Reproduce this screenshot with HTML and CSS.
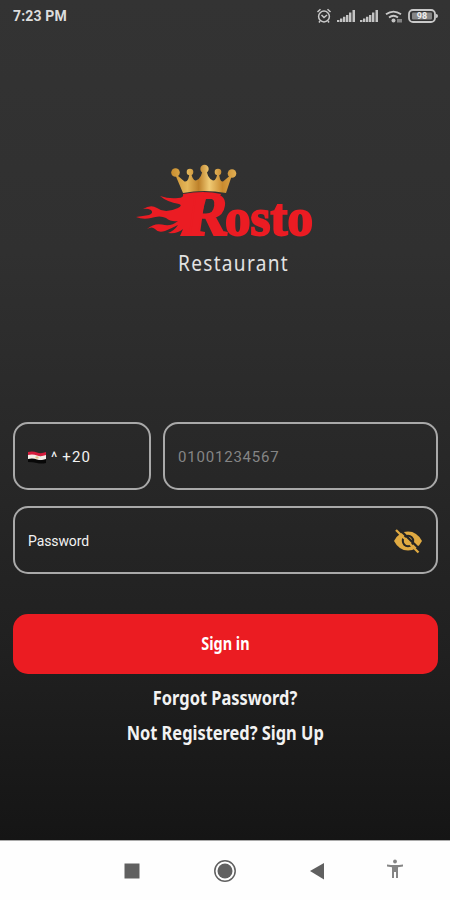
FILE: index.html
```html
<!DOCTYPE html>
<html lang="en">
<head>
<meta charset="utf-8">
<meta name="viewport" content="width=device-width">
<title>Rosto Restaurant</title>
<link rel="stylesheet" href="styles.css">
</head>
<body>
<main class="screen">
  <header class="status">
    <span class="time">7:23 PM</span>
    <svg class="status-icons" viewBox="0 0 124 20" width="124" height="20">
      <g fill="none" stroke="#c9c9c9" stroke-width="1.5">
        <circle cx="9" cy="10.5" r="5.4"/><path d="M2.5 6l3-2.8M15.500 6l-3-2.800M6.500 9l2.500 2.500L12 9M5 15l-1 1.500M13 15l1 1.500"/>
      </g>
      <g fill="#c4c4c4">
        <path d="M22 14h2.400v2H22zM25 12.500h2.400V16H25zM28 10.800h2.400V16H28zM31 9h2.400v7H31zM34 6.500h2.400V16H34zM37.500 4h2.500v12h-2.500z"/>
        <path d="M45 14h2.400v2H45zM48 12.500h2.400V16H48zM51 10.800h2.400V16H51zM54 9h2.400v7H54zM57 6.500h2.400V16H57zM60.500 4h2.500v12h-2.500z"/>
        <circle cx="78.500" cy="14.500" r="2"/><path d="M82 13h5v3.500h-5z" opacity=".55"/>
      </g>
      <g fill="none" stroke="#c9c9c9" stroke-width="1.800">
        <path d="M71 8.300q7.500-5.500 15 0M74 11.500q4.500-3.500 9 0"/>
        <rect x="94" y="4" width="26" height="12" rx="4"/>
      </g>
      <path d="M121 8q2 0 2 2t-2 2z" fill="#c9c9c9"/>
      <rect x="97" y="6.500" width="20" height="7" rx="1" fill="#858585"/>
      <text x="107" y="13.200" class="charge">98</text>
    </svg>
  </header>

  <section class="brand">
    <svg viewBox="125 155 200 125" width="200" height="125" role="img" aria-label="Rosto Restaurant">
      <defs>
        <linearGradient id="gold" gradientUnits="userSpaceOnUse" x1="171" y1="0" x2="237" y2="0">
          <stop offset="0" stop-color="#c98d2d"/><stop offset=".25" stop-color="#e5b75a"/><stop offset=".42" stop-color="#bd8029"/><stop offset=".58" stop-color="#f0cb75"/><stop offset=".78" stop-color="#c98a2e"/><stop offset="1" stop-color="#e2b054"/>
        </linearGradient>
      </defs>
      <g fill="url(#gold)">
        <path d="M183 193L174.500 173l10 8.500q4.500 1 5-9.500h1.500q1.500 9 5 8.500 6-2 7-13h3q1 11 7 13 3.500.5 4.500-8.500h1.500q.5 10.500 4 9.500l9.500-8L226 193q-22-4-43 0z"/>
        <circle cx="175.500" cy="172.500" r="4.300"/><circle cx="190" cy="172" r="3.300"/><circle cx="204.500" cy="169" r="4.200"/><circle cx="218" cy="172" r="3.300"/><circle cx="232" cy="173.500" r="4.300"/>
      </g>
      <path fill="#eb1c23" d="M183 194Q204 190 221 194L219 199H206L196 236H180L183 229Q178 234 168 233Q174 231 178 225Q172 228 165 231Q158 233 155 229Q152 226 147 229Q154 223 162 224.500Q171 227 178 221Q171 222 166 218Q160 215 151 218Q143 220 136 217Q143 216 149 215Q154 213 151 210Q147 208 143 209Q151 204 157 208Q165 214 178 208Q183 205 179 204Q167 202 160 196Q169 199 178 198Q184 198 183 194z"/>
      <text class="initial" transform="translate(184 235) skewX(-8)" textLength="42" lengthAdjust="spacingAndGlyphs">R</text>
      <text class="wordmark" x="225" y="235" textLength="88" lengthAdjust="spacingAndGlyphs">osto</text>
      <text class="subtitle" x="178" y="270.500" textLength="111" lengthAdjust="spacingAndGlyphs">Restaurant</text>
    </svg>
  </section>

  <form class="login">
    <div class="phone">
      <div class="field country">
        <svg class="flag" viewBox="0 0 18 15" width="18" height="15">
          <path d="M0 2q5-1 9 .5T18 2v4H0z" fill="#d51c3c"/><path d="M0 5q5-1 9 .5t9-.5v5H0z" fill="#f4eee8"/><path d="M0 9q5-1 9 .500t9-.5v4q-5 1-9 0T0 12z" fill="#080808"/><path d="M7.500 6.500h3v2h-3z" fill="#dfc188"/>
        </svg>
        <span class="caret">^</span><span class="code">+20</span>
      </div>
      <div class="field number">01001234567</div>
    </div>
    <div class="field password">
      <span class="password-label">Password</span>
      <svg class="eye" viewBox="0 0 30 26" width="30" height="26">
        <path d="M1 13Q6 3.500 15 3.500T29 13Q24 22.500 15 22.500T1 13z" fill="#e0aa42"/>
        <circle cx="15" cy="13" r="5.200" fill="none" stroke="#242424" stroke-width="2"/>
        <path d="M5.500 .500L27.500 22" stroke="#242424" stroke-width="2.400"/>
        <path d="M3 2L25.500 24.500" stroke="#e0aa42" stroke-width="2.300"/>
      </svg>
    </div>
    <button class="signin" type="button"><span>Sign in</span></button>
  </form>
  <nav class="links">
    <a class="forgot">Forgot Password?</a>
    <a class="register">Not Registered? Sign Up</a>
  </nav>
</main>
<footer class="navbar">
  <svg viewBox="0 0 24 24" width="24" height="24"><path d="M4.500 4.500h15v15h-15z" fill="#606060"/></svg>
  <svg viewBox="0 0 24 24" width="24" height="24"><circle cx="12" cy="12" r="10.200" fill="none" stroke="#606060" stroke-width="1.500"/><circle cx="12" cy="12" r="7.500" fill="#606060"/></svg>
  <svg viewBox="0 0 24 24" width="24" height="24"><path d="M4 12L18 4v16.500z" fill="#606060"/></svg>
  <svg viewBox="0 0 24 24" width="24" height="24" fill="#858585"><circle cx="11" cy="2.500" r="1.900"/><path d="M3 5.500q8 1 16 0V7.500l-5 .8V19h-2v-6h-2v6H8V8.300l-5-.8z"/></svg>
</footer>
</body>
</html>
```
FILE: styles.css
```css
* { box-sizing: border-box; }
body { margin: 0; width: 450px; height: 900px; overflow: hidden; display: flex; flex-direction: column; font-family: Roboto, sans-serif; color: #f2f2f2; }
.screen { height: 840px; background: linear-gradient(#333 0, #303030 30%, #282828 54%, #202020 78%, #151515); }
.status { height: 32px; display: flex; align-items: center; justify-content: space-between; padding: 0 11px 0 13px; }
.time { font-size: 14px; font-weight: 700; letter-spacing: .15px; color: #ddd; }
.charge { font: 700 9px Roboto, sans-serif; fill: #eee; text-anchor: middle; }
.brand { height: 390px; padding: 123px 0 0 125px; }
.brand svg { display: block; }
.initial { font: 700 62px "Liberation Serif", serif; fill: #eb1c23; stroke: #eb1c23; stroke-width: 2; }
.wordmark { font: 700 52px "Liberation Serif", serif; fill: #eb1c23; stroke: #eb1c23; stroke-width: 2; }
.subtitle { font: 400 22px "Noto Sans", sans-serif; letter-spacing: 1.5px; fill: #e2e2e2; }
.login { padding: 0 12px 0 13px; }
.phone { display: flex; gap: 12px; }
.field { height: 68px; border: 2px solid #a9a9a9; border-radius: 15px; display: flex; align-items: center; padding: 0 13px; }
.country { width: 138px; padding-top: 2px; }
.flag { margin-top: 1px; }
.caret { margin-left: 5px; font-size: 15px; }
.code { margin-left: 5px; font-size: 15px; letter-spacing: 1.1px; }
.number { flex: 1; padding-top: 2px; font-size: 15px; letter-spacing: .8px; color: #858585; }
.password { margin-top: 16px; justify-content: space-between; padding-top: 1px; }
.password-label { font-size: 14px; letter-spacing: -.1px; }
.signin { display: flex; align-items: center; justify-content: center; width: 100%; height: 60px; margin-top: 40px; padding: 0 0 2px; border: 0; border-radius: 15px; background: #eb1c22; color: #fff; font: 700 17px "Noto Sans", sans-serif; }
.signin span { transform: scaleX(.85); }
.links { display: flex; flex-direction: column; align-items: center; padding-top: 6px; font: 700 20px/35px "Noto Sans", sans-serif; }
.links a { white-space: nowrap; transform: scaleX(.82); }
.navbar { height: 60px; border-top: 1px solid #aaa; background: #fefefe; display: flex; align-items: center; gap: 69px; padding-left: 120px; }
.navbar svg { flex: none; }
.navbar svg:last-child { margin-left: -15px; }
```
